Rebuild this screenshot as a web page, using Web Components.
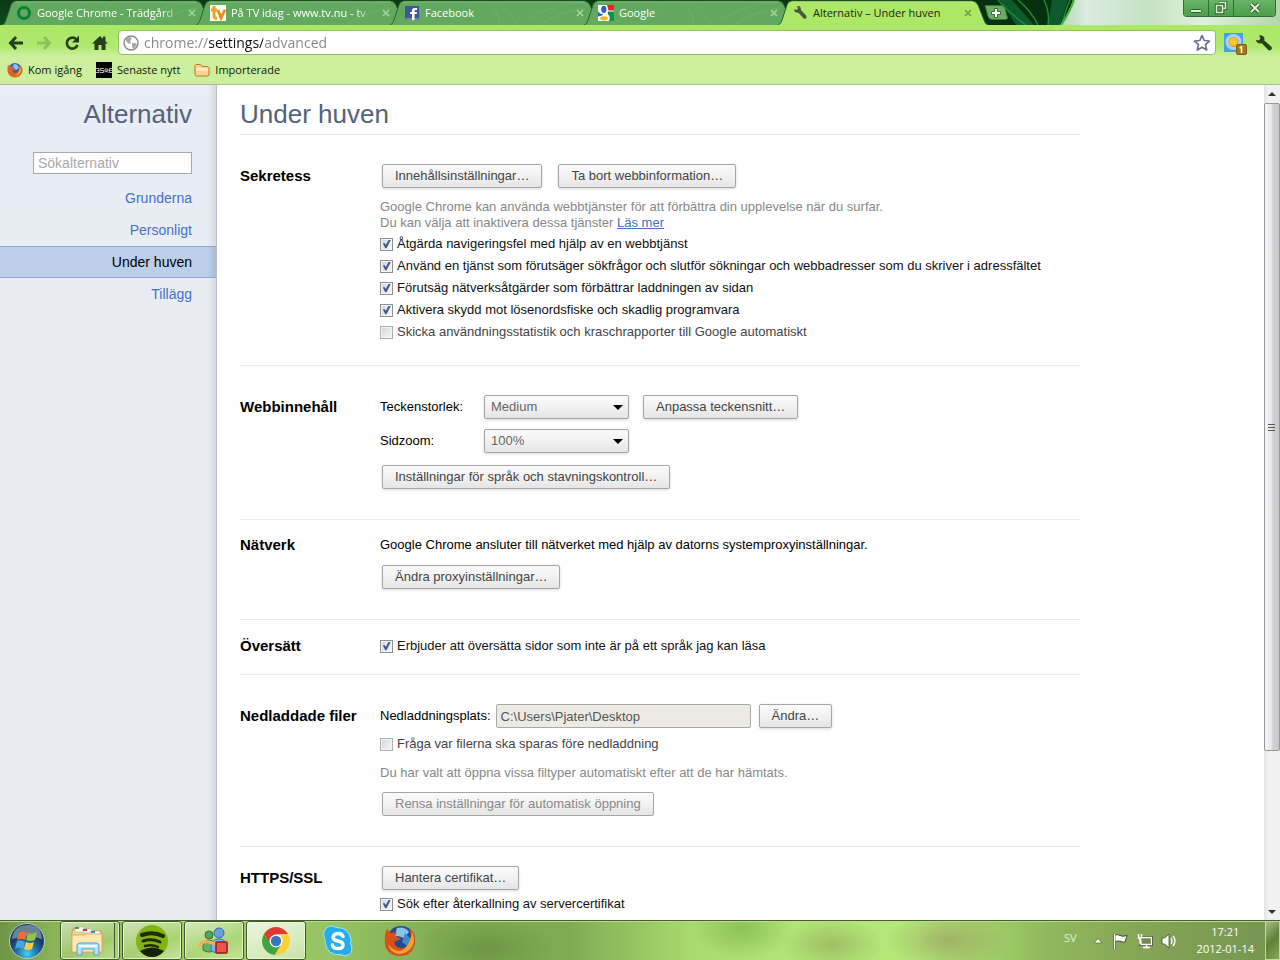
<!DOCTYPE html>
<html lang="sv">
<head>
<meta charset="utf-8">
<title>Alternativ – Under huven</title>
<style>
	:root {
		--font-ui: "Open Sans", "Noto Sans", sans-serif;
		--font-page: "Liberation Sans", Arial, sans-serif;
		--color-frame: #ace766;
		--color-bookmarks: #cbef9c;
		--color-title: #53637d;
		--color-link: #4272c0;
		--color-muted: #888;
	}
	html, body {
		height: 100%;
		margin: 0;
	}
	body {
		display: flex;
		flex-direction: column;
		overflow: hidden;
		background: #fff;
		font-family: var(--font-page);
		font-size: 13px;
		line-height: 16px;
		color: #000;
	}
	.page {
		display: flex;
		flex: 1;
		min-height: 0;
	}
</style>
</head>
<body>
	<tab-strip>
		<browser-tab label="Google Chrome - Trädgård" fade>
			<svg width="16" height="16" viewBox="0 0 16 16"><circle cx="8" cy="8" r="5.500" fill="none" stroke="#0c7f37" stroke-width="3"/></svg>
		</browser-tab>
		<browser-tab label="På TV idag - www.tv.nu - tv" fade>
			<svg width="16" height="16" viewBox="0 0 16 16"><path fill="#fff" d="M0 0h16v16H0z"/><path fill="none" stroke="#f4a11d" stroke-width="3" d="M4 1v9q0 3.500 3 3.500M1 5h6"/><path fill="none" stroke="#f08c1a" stroke-width="2.800" d="M8 5l3 8 4-8.500"/></svg>
		</browser-tab>
		<browser-tab label="Facebook">
			<svg width="16" height="16" viewBox="0 0 16 16"><path fill="#3b5998" d="M1 1h14v14H1z"/><path fill="#6d84b4" d="M1 13h14v2H1z"/><path fill="#fff" d="M8 15V9H6V7h2V5.500Q8 3 10.500 3H13v2h-1.500Q10.500 5 10.500 6v1H13l-.4 2h-2.100v6z"/></svg>
		</browser-tab>
		<browser-tab label="Google">
			<svg width="16" height="16" viewBox="0 0 16 16"><path fill="#fff" d="M0 0h16v16H0z"/><path fill="#e8271c" d="M9 0h7v5.500H10.500z"/><path fill="#0f9246" d="M10 6.500h6V16h-5q2-4-1-6.500z"/><path fill="#3162c4" d="M0 6.500Q2 9 5 9l-1 1.500-4 1z"/><ellipse cx="5.800" cy="4.300" rx="2.600" ry="3.600" fill="#2c5cc5"/><ellipse cx="6" cy="13.300" rx="3.800" ry="2.100" fill="#f5b11c"/></svg>
		</browser-tab>
		<browser-tab label="Alternativ – Under huven" active>
			<svg width="16" height="16" viewBox="0 0 16 16"><path fill="#4c5446" d="M2 4.500l3 .3L6 3.500 5 1q3-.5 4 2.200l-.2 1.900 5.400 5.400q1.200 1.800-.3 3-1.400.7-2.700-.6L6.400 7.700Q2.400 8 2 4.500z"/></svg>
		</browser-tab>
	</tab-strip>
	<address-bar url="chrome://settings/advanced"></address-bar>
	<bookmark-bar>
		<bookmark-link label="Kom igång">
			<svg width="16" height="16" viewBox="0 0 16 16"><circle cx="8" cy="8" r="7" fill="#3b64ad"/><path fill="#8fc4e8" d="M7 2q4 0 5 4l-3 2-3-3z"/><path fill="#e2631a" d="M1 3l2 1.500L6 4.500 5.500 6 8 7.500 5 9q1.500 2.500 4 2 3-1 3.500-5L12 2.500Q16 5 15.500 9 14 15.500 8 15.500T.5 9Q.3 5.500 1 3z"/><path fill="#f7b02e" d="M13 5q2 3 0 6-2 3-5 3 4-2 5-9z"/></svg>
		</bookmark-link>
		<bookmark-link label="Senaste nytt">
			<svg width="16" height="16" viewBox="0 0 16 16"><path d="M0 0h16v16H0z"/><path fill="none" stroke="#ddd" stroke-width=".8" d="M0 6.500h3v4H0M1 8.500h2M8 6.500H4.500v2h3v2H4M9 10.500V7h3v2H9.500l3 1.500M16 6.500h-2.500v4H16M14 8.500h2"/></svg>
		</bookmark-link>
		<bookmark-link label="Importerade">
			<svg width="16" height="16" viewBox="0 0 16 16"><path fill="#fbd38e" stroke="#b9772c" d="M1 13V3.500L2 2.500h4.500l1.500 2h6l1 1V13l-1 1H2z"/><path fill="#fee7b8" d="M2 6h12v3H2z"/></svg>
		</bookmark-link>
	</bookmark-bar>

	<div class="page">
		<settings-sidebar heading="Alternativ">
			<side-item>Grunderna</side-item>
			<side-item>Personligt</side-item>
			<side-item selected>Under huven</side-item>
			<side-item>Tillägg</side-item>
		</settings-sidebar>

		<settings-page heading="Under huven">
			<settings-section heading="Sekretess" style="--top: 29px; --bottom: 22px">
				<option-row style="--gap: 14px">
					<push-button>Innehållsinställningar…</push-button>
					<push-button>Ta bort webbinformation…</push-button>
				</option-row>
				<help-text style="--before: 11px; --after: 2px" link="Läs mer">Google Chrome kan använda webbtjänster för att förbättra din upplevelse när du surfar.<br>Du kan välja att inaktivera dessa tjänster</help-text>
				<check-option label="Åtgärda navigeringsfel med hjälp av en webbtjänst" checked></check-option>
				<check-option label="Använd en tjänst som förutsäger sökfrågor och slutför sökningar och webbadresser som du skriver i adressfältet" checked></check-option>
				<check-option label="Förutsäg nätverksåtgärder som förbättrar laddningen av sidan" checked></check-option>
				<check-option label="Aktivera skydd mot lösenordsfiske och skadlig programvara" checked></check-option>
				<check-option label="Skicka användningsstatistik och kraschrapporter till Google automatiskt"></check-option>
			</settings-section>

			<settings-section heading="Webbinnehåll" style="--top: 29px; --bottom: 30px">
				<option-row style="--gap: 12px">
					<select-field label="Teckenstorlek:" options="Mycket liten|Liten|Medium|Stor|Mycket stor" value="Medium"></select-field>
					<push-button>Anpassa teckensnitt…</push-button>
				</option-row>
				<option-row style="--before: 10px">
					<select-field label="Sidzoom:" options="50%|75%|100%|125%|150%|200%" value="100%"></select-field>
				</option-row>
				<option-row style="--before: 12px">
					<push-button>Inställningar för språk och stavningskontroll…</push-button>
				</option-row>
			</settings-section>

			<settings-section heading="Nätverk" style="--top: 13px; --bottom: 30px">
				<option-row>Google Chrome ansluter till nätverket med hjälp av datorns systemproxyinställningar.</option-row>
				<option-row style="--before: 8px">
					<push-button>Ändra proxyinställningar…</push-button>
				</option-row>
			</settings-section>

			<settings-section heading="Översätt" style="--top: 14px; --bottom: 16px">
				<option-row>
					<check-option label="Erbjuder att översätta sidor som inte är på ett språk jag kan läsa" checked></check-option>
				</option-row>
			</settings-section>

			<settings-section heading="Nedladdade filer" style="--top: 29px; --bottom: 30px">
				<option-row style="--gap: 6px">
					<path-field label="Nedladdningsplats:" value="C:\Users\Pjater\Desktop"></path-field>
					<push-button>Ändra…</push-button>
				</option-row>
				<option-row style="--before: 4px">
					<check-option label="Fråga var filerna ska sparas före nedladdning"></check-option>
				</option-row>
				<help-text style="--before: 9px; --after: 11px">Du har valt att öppna vissa filtyper automatiskt efter att de har hämtats.</help-text>
				<option-row>
					<push-button disabled>Rensa inställningar för automatisk öppning</push-button>
				</option-row>
			</settings-section>

			<settings-section heading="HTTPS/SSL" style="--top: 19px; --bottom: 30px">
				<option-row>
					<push-button>Hantera certifikat…</push-button>
				</option-row>
				<option-row style="--before: 2px">
					<check-option label="Sök efter återkallning av servercertifikat" checked></check-option>
				</option-row>
			</settings-section>
		</settings-page>

		<scroll-rail></scroll-rail>
	</div>

	<task-bar>
		<task-button name="Utforskaren" open stacked>
			<svg width="36" height="34" viewBox="0 0 36 34"><path fill="#f2d88e" stroke="#c39a42" d="M3 8l1-3h7l1 2h20l1 2v19H3z"/><path fill="#fff" stroke="#a99" stroke-width=".5" d="M6 3h9v5H6zM14 5h9v4h-9zM21 7h10v4H21z"/><path fill="#29a745" d="M6 3h4v2H6z"/><path fill="#d33" d="M14 5h4v2h-4z"/><path fill="#2b8fd8" d="M22 7h4v2h-4z"/><path fill="#fbe9b0" stroke="#d9b35f" d="M3 11h12l2-1h16v18H3z"/><path fill="#b5e1f7" stroke="#4ea0cf" d="M8 31V22q0-3 3-3h16q3 0 3 3v9h-5v-6H13v6z"/><path stroke="#eefaff" stroke-width="2" d="M10 22h18"/></svg>
		</task-button>
		<task-button name="Spotify" open>
			<svg width="34" height="34" viewBox="0 0 34 34"><circle cx="17" cy="17" r="16" fill="#82b411"/><path fill="none" stroke="#1f2b0a" stroke-linecap="round" stroke-width="4" d="M7 11q11-4 21 1"/><path fill="none" stroke="#1f2b0a" stroke-linecap="round" stroke-width="3" d="M8 17q9-3 17 1"/><path fill="none" stroke="#1f2b0a" stroke-linecap="round" stroke-width="2.500" d="M10 22q7-2 13 1"/><path fill="#14220c" d="M5 27q12-7 24 0-5 6-12 6T5 27z"/></svg>
		</task-button>
		<task-button name="Messenger" open>
			<svg width="34" height="34" viewBox="0 0 34 34"><circle cx="12" cy="11" r="4" fill="#57a35a" stroke="#2c7437"/><path fill="#65b069" stroke="#2f7a3c" d="M6 26q-1-10 6-10t6 10q-6 4-12 0z"/><circle cx="22" cy="9" r="5" fill="#69a2d8" stroke="#34679f"/><path fill="#7eb4e3" stroke="#3a72ac" d="M14 27q-1-12 8-12t8 12q-8 4-16 0z"/><path fill="none" stroke="#f0b352" stroke-width="3" d="M2 23q3-8 13-4t16-1q-3 7-9 8"/><rect x="19" y="18" width="11" height="11" rx="1" fill="#ef5350" stroke="#941b1b" stroke-width="1.500"/></svg>
		</task-button>
		<task-button name="Google Chrome" open active>
			<svg width="32" height="32" viewBox="0 0 32 32"><path fill="#dc3b2e" d="M3.900 9A14 14 0 0 1 28.100 9L16 9.500 10 19z"/><path fill="#3da542" d="M3.900 9A14 14 0 0 0 14.800 30L21 20 16 16 10 18.500z"/><path fill="#fbd13a" d="M28.100 9A14 14 0 0 1 14.800 30L21.500 19.500 21 9.500z"/><circle cx="16" cy="16" r="6.500" fill="#fff"/><circle cx="16" cy="16" r="5.200" fill="#3876bd"/></svg>
		</task-button>
		<task-button name="Skype">
			<svg width="32" height="32" viewBox="0 0 32 32"><path fill="#23aeea" stroke="#a6e3fb" d="M9 1q3 0 5 1.500Q27 2 29 15q0 2-.5 3.500Q32 26 27 29.500q-4 2.500-8 .2Q5 31 3 17q0-1 .2-2.500Q0 9 3.500 4 6 1 9 1z"/><path fill="none" stroke="#fff" stroke-linecap="round" stroke-width="3.500" d="M21 11.500Q20 8.500 16 8.500t-5 3.500q0 3 5 4t5 4q0 3.500-5 3.500t-5.500-3.500"/></svg>
		</task-button>
		<task-button name="Firefox">
			<svg width="34" height="34" viewBox="0 0 34 34"><circle cx="18" cy="16" r="14" fill="#234b8d"/><path fill="#86c5ea" d="M14 4q8-2 12 4l-5 6-6-2-4 1z"/><path fill="#4488c4" d="M22 9l6 6-3 8-6-5z"/><path fill="#d9501b" d="M4 5l4 4 6-1-2 4 6 3-7 3q2 7 9 6 8-2 8-12l-2-8q7 5 6 14-2 14-15 14Q4 32 2 20 1 11 4 5z"/><path fill="#f4a32a" d="M29 8q4 8 0 15-5 7-13 7Q7 29 5 20q5 7 12 7 9-2 12-19z"/></svg>
		</task-button>
	</task-bar>

<script>
class TabStrip extends HTMLElement {
	connectedCallback() {
		if (this.shadowRoot) {
			return;
		}

		this.attachShadow({ mode: 'open' });
		this.shadowRoot.innerHTML = `
			<style>
				:host {
					display: flex;
					flex: none;
					height: 25px;
					padding-left: 2px;
					box-sizing: border-box;
					position: relative;
					background: linear-gradient(#0a3a12, #0d4a19);
				}
				.theme {
					position: absolute;
					right: 0;
					top: 0;
					width: 320px;
					height: 25px;
				}
				.new-tab {
					position: relative;
					align-self: flex-start;
					width: 24px;
					height: 15px;
					margin: 5px 0 0 12px;
					padding: 0;
					border: 0;
					background: none;
				}
				.new-tab svg {
					display: block;
				}
				.window {
					position: relative;
					display: flex;
					align-self: flex-start;
					margin: 0 4px 0 auto;
					height: 17px;
					box-sizing: border-box;
					border: 1px solid #2c7031;
					border-top: 0;
					border-radius: 0 0 4px 4px;
					overflow: hidden;
				}
				.window button {
					width: 25px;
					padding: 0;
					border: 0;
					border-right: 1px solid #2c7031;
					background: linear-gradient(#69b567, #4b9e4a);
				}
				.window button:last-child {
					width: 41px;
					border-right: 0;
				}
				.window svg {
					display: block;
					margin: 0 auto;
				}
			</style>
			<svg class="theme" viewBox="0 0 320 25">
				<defs>
					<linearGradient id="haze"><stop offset="0" stop-color="#b3d9b4"/><stop offset=".12" stop-color="#dcebdf"/><stop offset=".4" stop-color="#c4e4c3"/><stop offset=".65" stop-color="#dff0da"/><stop offset="1" stop-color="#b4d6ab"/></linearGradient>
				</defs>
				<path fill="#06300f" d="M0 0h140v25H0z"/>
				<path fill="#0f5a2c" d="M40 0h12l22 25H56zM92 0h16l-8 25H88z"/>
				<path fill="none" stroke="#1f8a35" stroke-width="1.500" d="M38 0q12 14 28 25M58 0q14 12 20 25M84 0q6 12 4 25M110 0q-6 14-8 25"/>
				<path fill="url(#haze)" d="M128 0h192v25H100Q110 10 113 0z"/>
				<path fill="none" stroke="#3fae2f" stroke-width="2" d="M114 0Q110 12 101 25"/>
			</svg>
			<slot></slot>
			<button class="new-tab" aria-label="Ny flik"><svg width="24" height="15"><path fill="#6cab64" stroke="#2f7436" d="M1 .5h16q3 0 4 3l2.500 9q.3 2-2 2H8q-3 0-4-3z"/><path fill="#fff" stroke="#40693b" d="M10.500 3.500h3v3h3v3h-3v3h-3v-3h-3v-3h3z"/></svg></button>
			<div class="window">
				<button aria-label="Minimera"><svg width="14" height="14"><rect x="1.500" y="8.500" width="11" height="3" rx="1" fill="#d9f0d3" stroke="#2e5d2e"/></svg></button>
				<button aria-label="Återställ"><svg width="14" height="14"><path fill="none" stroke="#2e5d2e" stroke-width="3.500" d="M5.500 1.500h6v6h-2M2.500 4.500h6v7h-6z"/><path fill="none" stroke="#d9f0d3" stroke-width="1.600" d="M5.500 1.500h6v6h-2M2.500 4.500h6v7h-6z"/></svg></button>
				<button aria-label="Stäng"><svg width="14" height="14"><path fill="none" stroke="#2e5d2e" stroke-width="4" d="M3 3l8 8M11 3l-8 8"/><path fill="none" stroke="#e4f5df" stroke-width="2" d="M3 3l8 8M11 3l-8 8"/></svg></button>
			</div>
		`;
	}
}

class BrowserTab extends HTMLElement {
	connectedCallback() {
		if (this.shadowRoot) {
			return;
		}

		const label = this.getAttribute('label') || '';
		const active = this.hasAttribute('active');
		const fill = active ? '#ace766' : '#60a95e';
		const edge = active ? '#b9ef7c' : '#84c27d';

		this.attachShadow({ mode: 'open' });
		this.shadowRoot.innerHTML = `
			<style>
				:host {
					display: flex;
					flex: 0 1 194px;
					min-width: 0;
					height: 25px;
					position: relative;
					align-items: center;
					box-sizing: border-box;
					padding: 1px 0 0 14px;
					gap: 5px;
					color: #fff;
					font: 11px/16px var(--font-ui);
				}
				:host([active]) {
					color: #1b2a12;
					z-index: 1;
				}
				.shape {
					position: absolute;
					left: 0;
					top: 0;
					width: calc(100% + 16px);
					height: 25px;
				}
				::slotted(svg) {
					flex: none;
					position: relative;
				}
				.label {
					flex: 1;
					min-width: 0;
					position: relative;
					overflow: hidden;
					white-space: nowrap;
				}
				:host([fade]) .label {
					-webkit-mask-image: linear-gradient(90deg, #000 85%, transparent);
					mask-image: linear-gradient(90deg, #000 85%, transparent);
				}
				button {
					flex: none;
					position: relative;
					width: 8px;
					height: 16px;
					padding: 0;
					border: 0;
					background: none;
					color: #a5d79d;
				}
				:host([active]) button {
					color: #6b9a45;
				}
				button svg {
					display: block;
				}
			</style>
			<svg class="shape" viewBox="0 0 210 25" preserveAspectRatio="none">
				<path fill="${fill}" stroke="#2c6430" stroke-width="1" d="M0 25Q3 24 4 20L9 5Q10 1 14 1H194Q198 1 200 5L206 20Q207 24 210 25"/>
				<path fill="none" stroke="${edge}" d="M13 2H195"/>
				${active ? '' : '<path fill="none" stroke="#7bbb73" stroke-opacity=".45" d="M60 25Q70 12 80 2M110 25Q108 10 98 2M128 25Q120 12 106 2M140 18Q165 3 190 3M150 25Q168 12 196 8"/>'}
			</svg>
			<slot></slot>
			<span class="label">${label}</span>
			<button aria-label="Stäng flik"><svg width="8" height="16"><path fill="none" stroke="currentColor" stroke-width="1.500" d="M1 5l6 6M7 5l-6 6"/></svg></button>
		`;
	}
}

class AddressBar extends HTMLElement {
	connectedCallback() {
		if (this.shadowRoot) {
			return;
		}

		const url = this.getAttribute('url') || '';

		this.attachShadow({ mode: 'open' });
		this.shadowRoot.innerHTML = `
			<style>
				:host {
					display: flex;
					flex: none;
					align-items: center;
					height: 31px;
					box-sizing: border-box;
					padding: 5px 8px 1px 8px;
					gap: 12px;
					background: linear-gradient(var(--color-frame), #b0e96d 70%, var(--color-bookmarks));
				}
				button {
					flex: none;
					display: block;
					padding: 0;
					border: 0;
					background: none;
				}
				button svg {
					display: block;
				}
				.omnibox {
					display: flex;
					align-items: center;
					flex: 1;
					height: 25px;
					box-sizing: border-box;
					margin-left: -2px;
					margin-right: -5px;
					padding: 0 4px;
					gap: 5px;
					background: #fff;
					border: 1px solid #8fc05b;
					border-radius: 4px;
				}
				/* the host part of the address is darker than the rest */
				input {
					flex: 1;
					min-width: 0;
					padding: 0;
					border: 0;
					outline: 0;
					font: 14px/22px var(--font-ui);
					color: #868686;
					background: linear-gradient(90deg, #868686 65px, #111 65px 119px, #868686 119px);
					-webkit-background-clip: text;
					background-clip: text;
					-webkit-text-fill-color: transparent;
				}
				.actions {
					display: flex;
					align-items: center;
					gap: 9px;
				}
			</style>
			<button aria-label="Tillbaka"><svg width="16" height="16"><path fill="none" stroke="#26401d" stroke-width="3" d="M15 8H3M8 2L2.500 8 8 14"/></svg></button>
			<button aria-label="Framåt"><svg width="16" height="16"><path fill="none" stroke="#8bc35b" stroke-width="3" d="M1 8h12M8 2l5.500 6L8 14"/></svg></button>
			<button aria-label="Läs in igen"><svg width="16" height="16"><path fill="none" stroke="#26401d" stroke-width="2.600" d="M12.500 4.500A5.500 5.500 0 1 0 13.500 10"/><path fill="#26401d" d="M15 .5V7.500H8z"/></svg></button>
			<button aria-label="Startsida"><svg width="16" height="16"><path fill="#26401d" d="M8 1L0 8.500h2.500V15h4v-5h3v5h4V8.500H16l-2.500-2.300V1.500h-2.500v2.300z"/></svg></button>
			<div class="omnibox">
				<svg width="16" height="16"><circle cx="8" cy="8" r="7" fill="#fff" stroke="#8c8c8c" stroke-width="1.500"/><path fill="#a8a8a8" d="M3 3l4-1 2 1.500L7 6l1 2-2 1-3-3zM9 8l3 0 2 1-3 5-2-2z"/></svg>
				<input type="text" aria-label="Adress" value="${url}">
				<button aria-label="Bokmärk sidan"><svg width="18" height="18"><path fill="#fff" stroke="#6a7390" stroke-width="1.700" stroke-linejoin="round" d="M9 1.500l2.200 5 5.300.5-4 3.600 1.200 5.400L9 13.200 4.300 16l1.200-5.400L1.500 7l5.300-.5z"/></svg></button>
			</div>
			<div class="actions">
				<button aria-label="Väder"><svg width="24" height="24"><path fill="#4a9fea" d="M1 2h19v19H1z"/><circle cx="10.500" cy="11" r="8" fill="#a9d5f5"/><circle cx="10.500" cy="11" r="4.500" fill="#fdc62f" stroke="#e79a20"/><rect x="13.500" y="13.500" width="10" height="10" rx="1.500" fill="#a57b15" stroke="#7d5c12"/><path fill="none" stroke="#fff" stroke-width="1.500" d="M16.500 17l2-1.200V22"/></svg></button>
				<button aria-label="Anpassa och kontrollera"><svg width="16" height="16" viewBox="0 0 16 16"><path fill="#26401d" d="M0 5l3 .3L4.500 3.500 3 .5q4-1 5.500 2.400L8.300 5.400l6.900 6.200q1.400 1.900-.3 3.500-1.600.9-3.100-.6L5.700 8.300Q.8 9 0 5z"/></svg></button>
			</div>
		`;
	}
}

class BookmarkBar extends HTMLElement {
	connectedCallback() {
		if (this.shadowRoot) {
			return;
		}

		this.attachShadow({ mode: 'open' });
		this.shadowRoot.innerHTML = `
			<style>
				:host {
					display: flex;
					flex: none;
					align-items: center;
					gap: 14px;
					height: 29px;
					box-sizing: border-box;
					padding: 0 7px;
					background: var(--color-bookmarks);
					border-bottom: 1px solid #aebba0;
				}
			</style>
			<slot></slot>
		`;
	}
}

class BookmarkLink extends HTMLElement {
	connectedCallback() {
		if (this.shadowRoot) {
			return;
		}

		this.attachShadow({ mode: 'open' });
		this.shadowRoot.innerHTML = `
			<style>
				:host {
					display: block;
				}
				a {
					display: flex;
					align-items: center;
					gap: 5px;
					color: #10180a;
					font: 11px/16px var(--font-ui);
					text-decoration: none;
				}
			</style>
			<a href="#"><slot></slot><span>${this.getAttribute('label') || ''}</span></a>
		`;
	}
}

class SettingsSidebar extends HTMLElement {
	connectedCallback() {
		if (this.shadowRoot) {
			return;
		}

		this.attachShadow({ mode: 'open' });
		this.shadowRoot.innerHTML = `
			<style>
				:host {
					display: block;
					flex: none;
					width: 217px;
					box-sizing: border-box;
					padding-top: 14px;
					border-right: 1px solid #b9bec9;
					background: linear-gradient(90deg, transparent 208px, #d3d8e1), linear-gradient(#e8edf6, #e9edf3 25%, #e9ecf2);
				}
				h1 {
					margin: 0 24px 23px;
					color: var(--color-title);
					font: 26px/30px var(--font-page);
					text-align: right;
				}
				.search {
					padding: 0 24px 8px 33px;
				}
				input {
					display: block;
					width: 100%;
					height: 22px;
					box-sizing: border-box;
					padding: 0 4px;
					border: 1px solid #a5a9b0;
					background: #fff;
					font: 14px/20px var(--font-page);
				}
				input::placeholder {
					color: #a9a9a9;
				}
			</style>
			<h1>${this.getAttribute('heading') || ''}</h1>
			<div class="search"><input type="search" aria-label="Sökalternativ" placeholder="Sökalternativ"></div>
			<nav><slot></slot></nav>
		`;
	}
}

class SideItem extends HTMLElement {
	connectedCallback() {
		if (this.shadowRoot) {
			return;
		}

		this.attachShadow({ mode: 'open' });
		this.shadowRoot.innerHTML = `
			<style>
				:host {
					display: block;
				}
				a {
					display: block;
					padding: 0 24px;
					border: solid transparent;
					border-width: 1px 0;
					color: var(--color-link);
					font-size: 14px;
					line-height: 30px;
					text-align: right;
					text-decoration: none;
				}
				:host([selected]) a {
					border-color: #8faad9;
					background: linear-gradient(90deg, #bbceea 208px, #a9bbd8);
					color: #000;
				}
			</style>
			<a href="#"><slot></slot></a>
		`;
	}
}

class SettingsPage extends HTMLElement {
	connectedCallback() {
		if (this.shadowRoot) {
			return;
		}

		this.attachShadow({ mode: 'open' });
		this.shadowRoot.innerHTML = `
			<style>
				:host {
					display: block;
					flex: 1;
					min-width: 0;
					overflow: hidden;
					padding: 14px 23px 0;
				}
				main {
					max-width: 840px;
				}
				h1 {
					margin: 0;
					padding-bottom: 5px;
					color: var(--color-title);
					font: 26px/30px var(--font-page);
				}
			</style>
			<main>
				<h1>${this.getAttribute('heading') || ''}</h1>
				<slot></slot>
			</main>
		`;
	}
}

class SettingsSection extends HTMLElement {
	connectedCallback() {
		if (this.shadowRoot) {
			return;
		}

		this.attachShadow({ mode: 'open' });
		this.shadowRoot.innerHTML = `
			<style>
				:host {
					display: block;
				}
				section {
					display: grid;
					grid-template-columns: 140px 1fr;
					padding: var(--top) 0 var(--bottom);
					border-top: 1px solid #eaeaea;
				}
				h2 {
					margin: 0;
					font-size: 15px;
					line-height: 24px;
				}
			</style>
			<section>
				<h2>${this.getAttribute('heading') || ''}</h2>
				<div><slot></slot></div>
			</section>
		`;
	}
}

class OptionRow extends HTMLElement {
	connectedCallback() {
		if (this.shadowRoot) {
			return;
		}

		this.attachShadow({ mode: 'open' });
		this.shadowRoot.innerHTML = `
			<style>
				:host {
					display: flex;
					align-items: center;
					min-height: 24px;
					gap: var(--gap, 0);
					margin-top: var(--before, 0);
				}
			</style>
			<slot></slot>
		`;
	}
}

class HelpText extends HTMLElement {
	connectedCallback() {
		if (this.shadowRoot) {
			return;
		}

		const link = this.getAttribute('link');

		this.attachShadow({ mode: 'open' });
		this.shadowRoot.innerHTML = `
			<style>
				:host {
					display: block;
					margin: var(--before, 0) 0 var(--after, 0);
					color: var(--color-muted);
				}
				a {
					color: var(--color-link);
				}
			</style>
			<slot></slot>${link ? ` <a href="#">${link}</a>` : ''}
		`;
	}
}

class PushButton extends HTMLElement {
	connectedCallback() {
		if (this.shadowRoot) {
			return;
		}

		this.attachShadow({ mode: 'open' });
		this.shadowRoot.innerHTML = `
			<style>
				:host {
					display: block;
					flex: none;
					margin-left: 2px;
				}
				button {
					display: block;
					height: 24px;
					padding: 0 12px;
					border: 1px solid #a6a6a6;
					border-radius: 2px;
					background: linear-gradient(#fafafa, #f4f4f4 40%, #e5e5e5);
					box-shadow: 0 1px 3px rgba(0, 0, 0, 0.15);
					color: #444;
					font: 13px/22px var(--font-page);
					white-space: nowrap;
				}
				button:disabled {
					color: #888;
					box-shadow: none;
				}
			</style>
			<button type="button" ${this.hasAttribute('disabled') ? 'disabled' : ''}><slot></slot></button>
		`;
	}
}

class CheckOption extends HTMLElement {
	connectedCallback() {
		if (this.shadowRoot) {
			return;
		}

		this.attachShadow({ mode: 'open' });
		this.shadowRoot.innerHTML = `
			<style>
				:host {
					display: block;
				}
				label {
					display: flex;
					align-items: center;
					gap: 4px;
					line-height: 22px;
					color: #444;
				}
				:host([checked]) label {
					color: #111;
				}
				input {
					appearance: none;
					flex: none;
					width: 13px;
					height: 13px;
					margin: 0;
					border: 1px solid #b0b0b0;
					background: linear-gradient(135deg, #d4d7dc, #f6f6f6) content-box, #f4f4f4;
					padding: 1px;
					box-sizing: border-box;
				}
				input:checked {
					border-color: #8e8f8f;
				}
				input:checked::before {
					content: "";
					display: block;
					width: 9px;
					height: 9px;
					background: #40568f;
					clip-path: polygon(10% 45%, 28% 38%, 42% 62%, 76% 0, 98% 2%, 50% 96%, 36% 96%);
				}
			</style>
			<label><input type="checkbox" ${this.hasAttribute('checked') ? 'checked' : ''}><span>${this.getAttribute('label') || ''}</span></label>
		`;
	}
}

class SelectField extends HTMLElement {
	connectedCallback() {
		if (this.shadowRoot) {
			return;
		}

		const value = this.getAttribute('value');
		const options = (this.getAttribute('options') || '').split('|');

		this.attachShadow({ mode: 'open' });
		this.shadowRoot.innerHTML = `
			<style>
				:host {
					display: grid;
					grid-template-columns: 104px 145px;
					align-items: center;
				}
				.box {
					position: relative;
				}
				.box::after {
					content: "";
					position: absolute;
					right: 6px;
					top: 10px;
					border: 5px solid transparent;
					border-top-color: #000;
					border-bottom: 0;
					pointer-events: none;
				}
				select {
					appearance: none;
					display: block;
					width: 100%;
					height: 24px;
					padding: 0 6px;
					border: 1px solid #a6a6a6;
					border-radius: 2px;
					background: linear-gradient(#fafafa, #f4f4f4 40%, #e5e5e5);
					box-shadow: 0 1px 3px rgba(0, 0, 0, 0.15);
					color: #666;
					font: 13px/22px var(--font-page);
				}
			</style>
			<label for="field">${this.getAttribute('label') || ''}</label>
			<div class="box"><select id="field">${options.map((option) => `<option ${option === value ? 'selected' : ''}>${option}</option>`).join('')}</select></div>
		`;
	}
}

class PathField extends HTMLElement {
	connectedCallback() {
		if (this.shadowRoot) {
			return;
		}

		this.attachShadow({ mode: 'open' });
		this.shadowRoot.innerHTML = `
			<style>
				:host {
					display: flex;
					align-items: center;
					gap: 5px;
				}
				input {
					width: 255px;
					height: 24px;
					box-sizing: border-box;
					margin: 0;
					padding: 0 4px;
					border: 1px solid #aaa;
					border-radius: 2px;
					background: #ebebe4;
					color: #555;
					font: 13px/22px var(--font-page);
				}
			</style>
			<label for="path">${this.getAttribute('label') || ''}</label>
			<input id="path" type="text" value="${this.getAttribute('value') || ''}" disabled>
		`;
	}
}

class ScrollRail extends HTMLElement {
	connectedCallback() {
		if (this.shadowRoot) {
			return;
		}

		this.attachShadow({ mode: 'open' });
		this.shadowRoot.innerHTML = `
			<style>
				:host {
					display: flex;
					flex-direction: column;
					flex: none;
					width: 16px;
					background: linear-gradient(90deg, #e4e4e4, #f2f2f2 30%, #f0f0f0);
				}
				svg {
					display: block;
				}
				.track {
					display: flex;
					flex-direction: column;
					flex: 1;
				}
				.thumb {
					display: flex;
					align-items: center;
					justify-content: center;
					height: 81%;
					box-sizing: border-box;
					border: 1px solid #979797;
					border-radius: 2px;
					background: linear-gradient(90deg, #f5f5f5, #e9e9eb 45%, #d3d3d6 55%, #c8c8cc);
				}
			</style>
			<svg width="16" height="18"><path fill="#333" d="M4 11l4-4 4 4z"/></svg>
			<div class="track"><div class="thumb"><svg width="8" height="9"><path stroke="#555" d="M0 1.500h7M0 4.500h7M0 7.500h7"/></svg></div></div>
			<svg width="16" height="17"><path fill="#333" d="M4 7l4 4 4-4z"/></svg>
		`;
	}
}

class TaskBar extends HTMLElement {
	connectedCallback() {
		if (this.shadowRoot) {
			return;
		}

		this.attachShadow({ mode: 'open' });
		this.shadowRoot.innerHTML = `
			<style>
				:host {
					display: flex;
					flex: none;
					align-items: center;
					height: 40px;
					box-sizing: border-box;
					border-top: 1px solid #45602e;
					box-shadow: inset 0 1px #b9dd8c;
					color: #fff;
					font: 11px/17px var(--font-ui);
					background:
						radial-gradient(ellipse 60px 30px at 74% 50%, rgba(150, 150, 95, 0.6), transparent),
						radial-gradient(ellipse 50px 30px at 58% 20%, rgba(120, 175, 70, 0.6), transparent),
						radial-gradient(ellipse 50px 26px at 65% 60%, rgba(145, 165, 90, 0.6), transparent),
						radial-gradient(ellipse 70px 34px at 38% 70%, rgba(105, 145, 65, 0.8), transparent),
						linear-gradient(90deg, #6f9448, #8ab257 4%, #a5cf6c 16%, #96c363 26%, #84ae55 34%, #7fa952 44%, #a9da6d 54%, #b1e574 62%, #b4e877 72%, #8fb85c 82%, #84a355 90%, #759550);
				}
				button {
					padding: 0;
					border: 0;
					background: none;
				}
				.start {
					margin: 0 14px 0 8px;
				}
				svg {
					display: block;
				}
				.apps {
					display: flex;
					gap: 2px;
				}
				.tray {
					display: flex;
					align-items: center;
					margin-left: auto;
				}
				.lang {
					margin-right: 15px;
					padding-bottom: 6px;
					color: #e3efd5;
				}
				.icons {
					display: flex;
					align-items: center;
					gap: 8px;
					margin-right: 20px;
				}
				.clock {
					margin-right: 11px;
					padding-bottom: 2px;
					text-align: center;
				}
				.desktop {
					width: 15px;
					height: 39px;
					box-sizing: border-box;
					border: 1px solid #c2d8a3;
					background: linear-gradient(135deg, #a7bd82, #5f8138 50%, #86a95c);
				}
			</style>
			<button class="start" aria-label="Start">
				<svg width="38" height="38"><defs><radialGradient id="orb" cy=".85"><stop offset="0" stop-color="#40d2f5"/><stop offset=".6" stop-color="#1f6fa5"/><stop offset="1" stop-color="#1b3f63"/></radialGradient></defs><circle cx="19" cy="19" r="17.500" fill="url(#orb)" stroke="#b6cfc9"/><path fill="#fff" fill-opacity=".35" d="M4 17Q5 4 19 3t15 14q-14-5-30 0z"/><path fill="#ee6c35" d="M11 11q4-3 8 0l-2 7q-4-2-8 0z"/><path fill="#8fc63e" d="M20 11q4 2 9-1l-2 8q-4 2-9 0z"/><path fill="#4aa5e4" d="M9 19q4-2 8 1l-2 7q-4-3-8 0z"/><path fill="#fccb3c" d="M18 20q4 2 8 0l-2 7q-4 2-8 0z"/></svg>
			</button>
			<div class="apps"><slot></slot></div>
			<div class="tray">
				<span class="lang">SV</span>
				<div class="icons">
					<svg width="12" height="16"><path fill="#fff" stroke="#51682f" stroke-width=".7" d="M2 10l4-4.500L10 10z"/></svg>
					<svg width="17" height="16"><path stroke="#3c4b28" stroke-width="3" d="M2.500 1v15"/><path fill="#fff" stroke="#3c4b28" d="M3 2q3-1 5 .5t7 0L13 9q-2 .500-4-.5t-6 0z"/><path stroke="#fff" stroke-width="1.500" d="M2.500 1v15"/></svg>
					<svg width="16" height="16"><path fill="#71894e" stroke="#3c4b28" stroke-width="3" d="M5 4.500h9.500v7H4V9"/><path fill="#71894e" stroke="#fff" stroke-width="1.300" d="M5 4.500h9.500v7H4V7"/><path fill="none" stroke="#fff" stroke-width="1.500" d="M6 14.500h7M9.500 12v2M1.500 1v4h3V1M3 5v5h1"/></svg>
					<svg width="16" height="16"><path fill="#fff" stroke="#3c4b28" stroke-width=".8" d="M1 5h2.500L8 1v14l-4.500-4H1z"/><path fill="none" stroke="#fff" stroke-width="1.300" d="M10 5q2 3 0 6M12 3q4 5 0 10"/></svg>
				</div>
				<div class="clock">17:21<br>2012-01-14</div>
				<button class="desktop" aria-label="Visa skrivbordet"></button>
			</div>
		`;
	}
}

class TaskButton extends HTMLElement {
	connectedCallback() {
		if (this.shadowRoot) {
			return;
		}

		this.attachShadow({ mode: 'open' });
		this.shadowRoot.innerHTML = `
			<style>
				:host {
					display: block;
				}
				button {
					display: flex;
					align-items: center;
					justify-content: center;
					width: 60px;
					height: 39px;
					padding: 0;
					border: 1px solid transparent;
					border-radius: 3px;
					background: none;
				}
				:host([open]) button {
					border-color: #3f5a2c;
					box-shadow: inset 0 0 0 1px rgba(240, 255, 220, 0.7);
					background: linear-gradient(160deg, rgba(255, 255, 255, 0.55), rgba(190, 230, 140, 0.35) 60%, rgba(225, 250, 190, 0.55));
				}
				:host([active]) button {
					background: linear-gradient(160deg, rgba(255, 255, 255, 0.8), rgba(225, 245, 200, 0.65));
				}
				:host([stacked]) button {
					padding-right: 6px;
					box-shadow: inset 0 0 0 1px rgba(240, 255, 220, 0.7), inset -4px 0 #a9cf7c, inset -5px 0 #3f5a2c;
				}
			</style>
			<button aria-label="${this.getAttribute('name') || ''}"><slot></slot></button>
		`;
	}
}

customElements.define('tab-strip', TabStrip);
customElements.define('browser-tab', BrowserTab);
customElements.define('address-bar', AddressBar);
customElements.define('bookmark-bar', BookmarkBar);
customElements.define('bookmark-link', BookmarkLink);
customElements.define('settings-sidebar', SettingsSidebar);
customElements.define('side-item', SideItem);
customElements.define('settings-page', SettingsPage);
customElements.define('settings-section', SettingsSection);
customElements.define('option-row', OptionRow);
customElements.define('help-text', HelpText);
customElements.define('push-button', PushButton);
customElements.define('check-option', CheckOption);
customElements.define('select-field', SelectField);
customElements.define('path-field', PathField);
customElements.define('scroll-rail', ScrollRail);
customElements.define('task-bar', TaskBar);
customElements.define('task-button', TaskButton);
</script>
</body>
</html>
